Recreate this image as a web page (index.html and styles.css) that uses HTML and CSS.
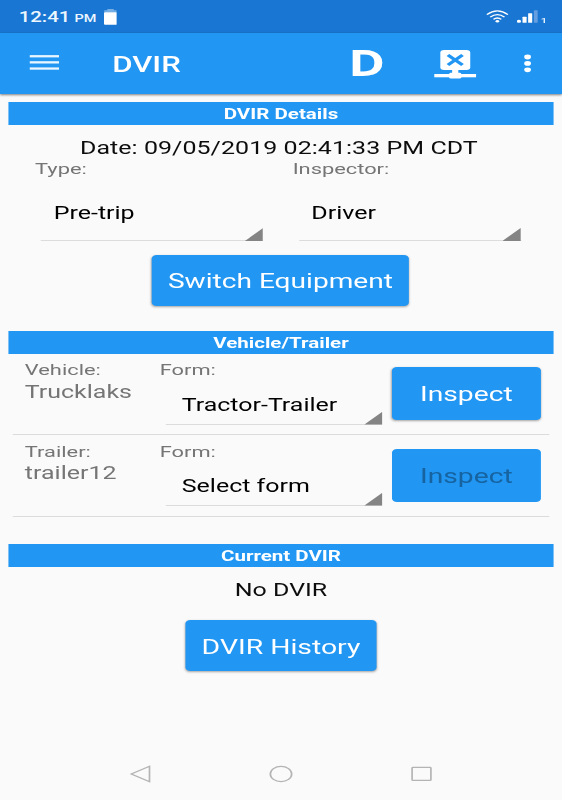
FILE: index.html
```html
<!DOCTYPE html>
<html lang="en">
<head>
<meta charset="utf-8">
<title>DVIR</title>
<link rel="stylesheet" href="styles.css">
</head>
<body>
<div class="screen">
  <div class="status">
    <span class="clock">12:41</span><span class="ampm">PM</span>
    <svg class="battery" width="9.4" height="16" viewBox="0 0 9.4 16"><path fill="#75aee5" d="M2.4 0h4.6v1.3h2.2v2.2H.2V1.3h2.2z"/><rect y="3.3" width="9.4" height="12.5" rx=".8" fill="#fff"/></svg>
    <svg class="wifi" width="16" height="13" viewBox="0 0 16 13" fill="none" stroke="#fff" stroke-width="1.3"><path d="M.5 4.6Q8-2.9 15.5 4.6M2.9 7.1q5.1-5 10.2 0M5.2 9.4q2.8-2.7 5.6 0"/><circle cx="8" cy="11.2" r="1.3" fill="#fff" stroke="none"/></svg>
    <svg class="signal" width="15" height="13" viewBox="0 0 15 13" fill="#fff"><circle cx="1.4" cy="11.3" r="1.5"/><rect x="3.9" y="6.8" width="2.9" height="5.9" rx=".5"/><rect x="7.9" y="3.2" width="2.9" height="9.5" rx=".5"/><rect x="12" y=".3" width="2.7" height="12.4" rx=".5" fill="#659fe0"/></svg>
    <span class="sim">1</span>
  </div>
  <header class="appbar">
    <svg class="menu" width="21" height="15" viewBox="0 0 21 15" fill="#e9f5ff"><rect width="21" height="2.3" y=".1"/><rect width="21" height="2.3" y="6.2"/><rect width="21" height="2.3" y="12.4"/></svg>
    <h1 class="title">DVIR</h1>
    <span class="duty">D</span>
    <svg class="network" width="30" height="30" viewBox="0 0 30 30"><g fill="#fff"><rect x="4.4" y="1" width="21.3" height="20" rx="2.7"/><path d="M12.8 20h4.4v4h-4.4z"/><rect y="25" width="30" height="3.3"/><rect x="10.7" y="23.8" width="8.6" height="5.7" rx="1.3"/></g><path d="M9.8 6.1l10.4 9.8M20.2 6.1L9.8 15.9" stroke="#2196f3" stroke-width="2.8"/></svg>
    <svg class="more" width="5" height="19" viewBox="0 0 5 19" fill="#fff"><circle cx="2.5" cy="3" r="2.4"/><circle cx="2.5" cy="9.4" r="2.4"/><circle cx="2.5" cy="15.8" r="2.4"/></svg>
  </header>
  <main class="content">
    <section class="details">
      <h2 class="band">DVIR Details</h2>
      <p class="date">Date: 09/05/2019 02:41:33 PM CDT</p>
      <div class="fields">
        <div class="field"><span class="label">Type:</span><div class="spinner">Pre-trip</div></div>
        <div class="field"><span class="label">Inspector:</span><div class="spinner">Driver</div></div>
      </div>
      <button class="button switch">Switch Equipment</button>
    </section>
    <section class="equipment">
      <h2 class="band">Vehicle/Trailer</h2>
      <div class="row">
        <div class="unit"><span class="label">Vehicle:</span><span class="name">Trucklaks</span></div>
        <div class="form"><span class="label">Form:</span><div class="spinner">Tractor-Trailer</div></div>
        <button class="button inspect">Inspect</button>
      </div>
      <div class="row">
        <div class="unit"><span class="label">Trailer:</span><span class="name">trailer12</span></div>
        <div class="form"><span class="label">Form:</span><div class="spinner">Select form</div></div>
        <button class="button inspect" disabled>Inspect</button>
      </div>
    </section>
    <section class="current">
      <h2 class="band">Current DVIR</h2>
      <p class="none">No DVIR</p>
      <button class="button history">DVIR History</button>
    </section>
  </main>
  <nav class="navbar">
    <svg width="16" height="18" viewBox="0 0 16 18"><path d="M1.4 9L14.4 1.3v15.4z"/></svg>
    <svg width="18" height="18" viewBox="0 0 18 18"><circle cx="9" cy="9" r="7.6"/></svg>
    <svg width="16" height="18" viewBox="0 0 16 18"><rect x="1.3" y="2.4" width="13.4" height="13" rx=".6"/></svg>
  </nav>
</div>
</body>
</html>
```
FILE: styles.css
```css
* { box-sizing: border-box; }

body {
  margin: 0;
  overflow: hidden;
  background: #fafafa;
}

/* A 1:2 phone screen, widened to fill the window. */
.screen {
  width: 400px;
  height: 800px;
  display: flex;
  flex-direction: column;
  transform: scaleX(1.405);
  transform-origin: 0 0;
  font-family: Roboto, "Liberation Sans", sans-serif;
  font-size: 17.78px;
  color: #0d0d0d;
}

h1, h2, p { margin: 0; }
svg { display: block; flex: none; }

.status {
  height: 33px;
  flex: none;
  display: flex;
  align-items: center;
  padding: 1px 10.6px 0 13.3px;
  background: #1976d2;
  color: #eef6ff;
  font-weight: 500;
}
.clock { font-size: 14.5px; }
.ampm { font-size: 10.3px; margin: 3px 0 0 3px; }
.battery { margin: -1px 0 0 5px; }
.wifi { margin: -1px 0 0 auto; }
.signal { margin: -1px 0 0 6px; }
.sim { font-size: 8px; margin: 7px 0 0 2px; }

.appbar {
  height: 60.5px;
  flex: none;
  display: flex;
  align-items: center;
  padding: 0 22.5px 0 20.4px;
  background: #2196f3;
  color: #fff;
  box-shadow: 0 1px 2px rgba(0, 0, 0, .5);
}
.menu { margin: -1px 0 0 .2px; }
.title {
  margin: 1px 0 0 38.3px;
  font-size: 22.2px;
  font-weight: 500;
}
.duty {
  margin: -2px 0 0 auto;
  font: bold 35.5px/60px "Open Sans", sans-serif;
}
.network { margin: 2px 33.3px 0 35px; }

.content {
  flex: 1;
  padding: 8px 5.7px 0;
}
.band {
  height: 23.5px;
  background: #2196f3;
  color: #fff;
  font-size: 14.6px;
  font-weight: 700;
  line-height: 24.5px;
  text-align: center;
}
.label {
  display: block;
  height: 18px;
  font-size: 15.56px;
  line-height: 19px;
  color: #757575;
}

.details { height: 229px; }
.date {
  padding-top: 11px;
  line-height: 24px;
  text-align: center;
  padding-right: 3px;
  letter-spacing: .04px;
}
.fields {
  display: flex;
  padding-left: 19.3px;
}
.field { width: 183.3px; }
.field .spinner {
  width: 158px;
  height: 63px;
  margin-left: 4.3px;
  padding-top: 7px;
  line-height: 57px;
}
.spinner {
  position: relative;
  padding-left: 9px;
  border-bottom: 1px solid #dcdcdc;
  color: #000;
}
.spinner::after {
  content: "";
  position: absolute;
  right: 0;
  bottom: -1px;
  width: 13px;
  height: 13px;
  background: #848484;
  clip-path: polygon(100% 0, 100% 100%, 0 100%);
}

.button {
  display: block;
  margin: 0 auto;
  padding: 2px 0 0;
  border: 0;
  border-radius: 3.5px;
  background: #2196f3;
  color: #fff;
  font: 20px Roboto, sans-serif;
  box-shadow: 0 1px 2px rgba(0, 0, 0, .35);
}
.button:disabled {
  color: #1663a0;
  box-shadow: none;
}
.switch {
  width: 183px;
  height: 51px;
  margin: 13.5px 0 0 102.4px;
}

.equipment { height: 213px; }
.row {
  display: flex;
  margin: 0 3px;
  height: 81.7px;
  border-bottom: 1px solid #dcdcdc;
}
.row:first-of-type { height: 81px; }
.row + .row .label { line-height: 20px; }
.row + .row .spinner { line-height: 52.5px; }
.row + .row .inspect { margin-top: 14.2px; padding-top: 1px; }
.unit {
  width: 96px;
  padding: 7px 0 0 9px;
}
.name {
  display: block;
  line-height: 26px;
  color: #757575;
}
.form {
  width: 164px;
  padding: 7px 0 0 9px;
}
.form .spinner {
  width: 154px;
  height: 45.5px;
  margin-left: 4.7px;
  padding-left: 11px;
  line-height: 52.5px;
}
.inspect {
  width: 106.5px;
  height: 53px;
  margin: 13.2px 0 0 10px;
  padding-top: 1px;
  font-size: 20.1px;
}

.none {
  margin-top: 11px;
  line-height: 24px;
  text-align: center;
}
.history {
  width: 135.5px;
  height: 51px;
  margin-top: 18px;
  font-size: 20.2px;
}

.navbar {
  height: 52px;
  flex: none;
  display: flex;
  justify-content: space-between;
  padding: 17px 92px 0;
}
.navbar svg {
  fill: none;
  stroke: #b4b4b4;
  stroke-width: 1.2;
}
```
